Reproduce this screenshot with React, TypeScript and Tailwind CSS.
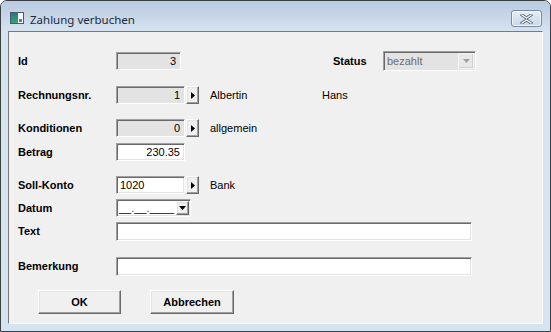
import React from "react";

const SUNKEN =
  "border border-t-[#a0a0a0] border-l-[#a0a0a0] border-b-white border-r-white shadow-[inset_1px_1px_0_#696969,inset_-1px_-1px_0_#e3e3e3]";
const RAISED =
  "border border-t-white border-l-white border-b-[#696969] border-r-[#696969] shadow-[inset_-1px_-1px_0_#a0a0a0,inset_1px_1px_0_#e3e3e3]";

function ArrowButton() {
  return (
    <div className={`ml-px flex h-[18px] w-[13px] items-center justify-center bg-[#f0f0f0] ${RAISED}`}>
      <svg width="4" height="7" viewBox="0 0 4 7">
        <path d="M0 0 L4 3.5 L0 7 Z" fill="#000" />
      </svg>
    </div>
  );
}

function Label({ children }: { children: React.ReactNode }) {
  return <div className="w-[98px] shrink-0 text-[11px] font-bold leading-none text-black">{children}</div>;
}

function ReadOnly({ value, w }: { value: string; w: string }) {
  return (
    <div className={`flex h-[18px] ${w} items-center justify-end bg-[#e3e3e3] pr-[4px] text-[11px] text-black ${SUNKEN}`}>
      {value}
    </div>
  );
}

export default function App() {
  return (
    <div className="h-[332px] w-[551px] overflow-hidden bg-white font-['Liberation_Sans',Arial,sans-serif]">
      <div className="flex h-[332px] w-[551px] flex-col rounded-t-[7px] border border-[#3c3f44] bg-[#d6e3f1]">
        {/* title bar */}
        <div className="flex h-[30px] shrink-0 items-start rounded-t-[6px] bg-gradient-to-b from-[#b8cbe1] to-[#d5e2f0]">
          <div className="ml-[9px] mt-[11px] flex h-[12px] w-[14px] border border-[#4a5a6a] bg-white">
            <div className="h-full w-[7px] bg-gradient-to-b from-[#1f7a8c] to-[#3aa36b]" />
            <div className="flex h-full flex-1 items-end justify-end pb-px pr-px">
              <div className="h-[3px] w-[3px] bg-[#6a7a8a]" />
            </div>
          </div>
          <div className="ml-[6px] mt-[10px] font-['Noto_Sans',sans-serif] text-[11.5px] leading-[17px] text-[#1e2a3a]">
            Zahlung verbuchen
          </div>
          <div className="ml-auto mr-[8px] mt-[9px] flex h-[17px] w-[31px] items-center justify-center rounded-[3px] border border-[#7a8aa0] bg-gradient-to-b from-[#e6eef7] to-[#c9d7e7] shadow-[inset_0_0_0_1px_rgba(255,255,255,0.6)]">
            <svg width="13" height="10" viewBox="0 0 13 10">
              <path
                d="M2 1 L6.5 4 L11 1 M2 9 L6.5 6 L11 9"
                fill="none"
                stroke="#5a6675"
                strokeWidth="3"
                strokeLinecap="square"
              />
              <path
                d="M2 1 L6.5 4 L11 1 M2 9 L6.5 6 L11 9"
                fill="none"
                stroke="#f4f7fb"
                strokeWidth="1.4"
                strokeLinecap="square"
              />
            </svg>
          </div>
        </div>

        {/* body */}
        <div className="flex h-[293px] shrink-0">
          <div className="w-[7px] shrink-0" />
          <div className="flex w-[535px] shrink-0 flex-col border border-t-[#7a7a7a] border-l-[#7a7a7a] border-b-[#fafafa] border-r-[#fafafa] bg-[#f0f0f0] pl-[9px] pt-[20px] text-[11px] text-black">
            {/* Id / Status */}
            <div className="flex h-[18px] items-center">
              <Label>Id</Label>
              <ReadOnly value="3" w="w-[65px]" />
              <div className="ml-[152px] w-[50px] text-[11px] font-bold">Status</div>
              <div className={`flex h-[20px] w-[93px] items-center bg-[#e3e3e3] ${SUNKEN}`}>
                <span className="pl-[3px] text-[11px] text-[#6d6d6d]">bezahlt</span>
                <div className="ml-auto mr-px flex h-[16px] w-[16px] items-center justify-center border border-[#f5f5f5] bg-[#e8e8e8] shadow-[inset_-1px_-1px_0_#cfcfcf]">
                  <svg width="7" height="4" viewBox="0 0 7 4">
                    <path d="M0 0 L7 0 L3.5 4 Z" fill="#a0a0a0" />
                  </svg>
                </div>
              </div>
            </div>

            {/* Rechnungsnr */}
            <div className="mt-[16px] flex h-[18px] items-center">
              <Label>Rechnungsnr.</Label>
              <ReadOnly value="1" w="w-[69px]" />
              <ArrowButton />
              <span className="ml-[11px] w-[112px]">Albertin</span>
              <span>Hans</span>
            </div>

            {/* Konditionen */}
            <div className="mt-[15px] flex h-[18px] items-center">
              <Label>Konditionen</Label>
              <ReadOnly value="0" w="w-[69px]" />
              <ArrowButton />
              <span className="ml-[11px]">allgemein</span>
            </div>

            {/* Betrag */}
            <div className="mt-[6px] flex h-[18px] items-center">
              <Label>Betrag</Label>
              <div className={`flex h-[18px] w-[69px] items-center justify-end bg-white pr-[4px] ${SUNKEN}`}>230.35</div>
            </div>

            {/* Soll-Konto */}
            <div className="mt-[15px] flex h-[18px] items-center">
              <Label>Soll-Konto</Label>
              <div className={`flex h-[18px] w-[69px] items-center bg-white pl-[3px] ${SUNKEN}`}>1020</div>
              <ArrowButton />
              <span className="ml-[11px]">Bank</span>
            </div>

            {/* Datum */}
            <div className="mt-[5px] flex h-[18px] items-center">
              <Label>Datum</Label>
              <div className={`flex h-[18px] w-[75px] items-center bg-white pl-[2px] ${SUNKEN}`}>
                <span>
                  __<span className="text-[#5a2a6a]">.</span>__<span className="text-[#5a2a6a]">.</span>____
                </span>
                <div className={`ml-auto mr-px flex h-[14px] w-[13px] items-center justify-center bg-[#f0f0f0] ${RAISED}`}>
                  <svg width="7" height="4" viewBox="0 0 7 4">
                    <path d="M0 0 L7 0 L3.5 4 Z" fill="#000" />
                  </svg>
                </div>
              </div>
            </div>

            {/* Text */}
            <div className="mt-[5px] flex h-[18px] items-center">
              <Label>Text</Label>
              <div className={`h-[19px] w-[356px] bg-white ${SUNKEN}`} />
            </div>

            {/* Bemerkung */}
            <div className="mt-[17px] flex h-[18px] items-center">
              <Label>Bemerkung</Label>
              <div className={`h-[19px] w-[356px] bg-white ${SUNKEN}`} />
            </div>

            {/* buttons */}
            <div className="ml-[20px] mt-[15px] flex gap-[29px]">
              <div className={`flex h-[24px] w-[83px] items-center justify-center bg-[#f0f0f0] text-[11px] font-bold ${RAISED}`}>
                OK
              </div>
              <div className={`flex h-[24px] w-[84px] items-center justify-center bg-[#f0f0f0] text-[11px] font-bold ${RAISED}`}>
                Abbrechen
              </div>
            </div>
          </div>
          <div className="w-[7px] shrink-0" />
        </div>
      </div>
    </div>
  );
}
